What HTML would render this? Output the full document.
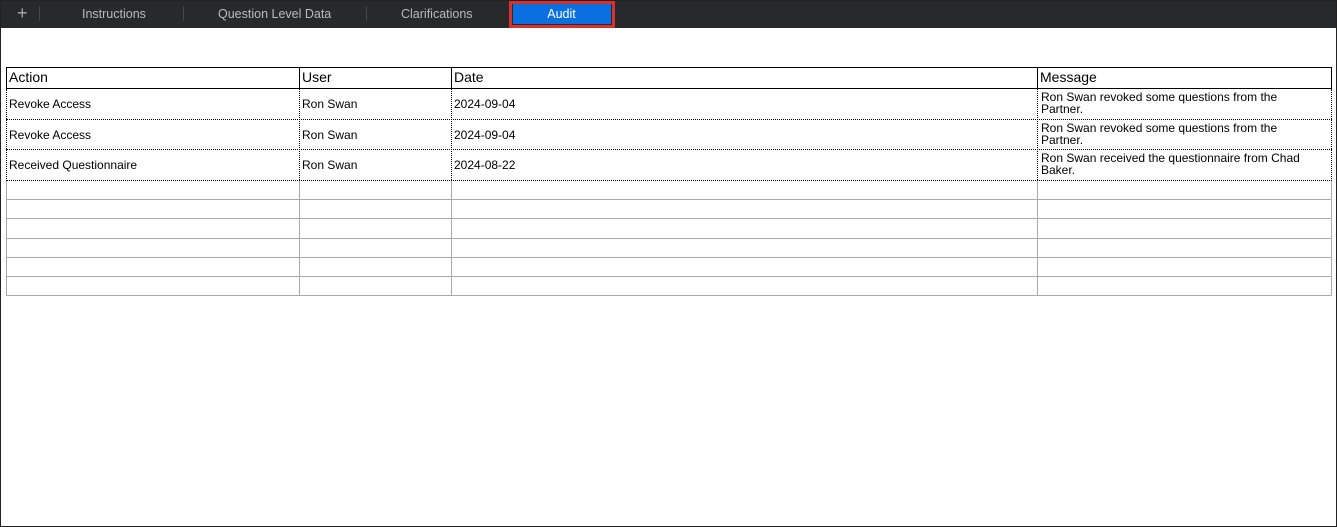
<!DOCTYPE html>
<html><head><style>
*{margin:0;padding:0;box-sizing:border-box}
body{width:1337px;height:527px;background:#fff;position:relative;overflow:hidden;font-family:"Liberation Sans",Arial,sans-serif}
.frame{position:absolute;left:0;top:0;width:1337px;height:527px;border:1px solid #222}
.bar{position:absolute;left:0;top:0;width:1337px;height:28px;background:#27292b}
.tab{position:absolute;top:7px;font-size:12.5px;color:#b8babc}
.sep{position:absolute;top:6px;width:1px;height:15px;background:#45484a}
.a{position:absolute}
.t{position:absolute;font-size:12px;color:#000;line-height:12px}
.h{position:absolute;font-size:14px;color:#000}
</style></head><body>
<div class="bar"></div>
<div class="tab" style="left:17px;top:3px;font-size:18px;color:#aaa">+</div>
<div class="sep" style="left:39px"></div>
<div class="tab" style="left:82px">Instructions</div>
<div class="sep" style="left:183px"></div>
<div class="tab" style="left:218px">Question Level Data</div>
<div class="sep" style="left:366px"></div>
<div class="tab" style="left:401px">Clarifications</div>
<div class="a" style="left:509px;top:1px;width:106px;height:27px;border:3px solid #d8302c;background:#27292b"></div>
<div class="a" style="left:513px;top:4px;width:98px;height:20px;background:#0a6fe0"></div>
<div class="tab" style="left:513px;width:97px;text-align:center;color:#fff">Audit</div>
<div class="frame"></div>

<div class="a" style="left:6px;top:67px;width:1326px;height:22px;border:1px solid #000"></div>
<div class="a" style="left:299px;top:67px;width:1px;height:22px;background:#000"></div>
<div class="a" style="left:451px;top:67px;width:1px;height:22px;background:#000"></div>
<div class="a" style="left:1037px;top:67px;width:1px;height:22px;background:#000"></div>
<div class="h" style="left:9px;top:69px">Action</div>
<div class="h" style="left:302px;top:69px">User</div>
<div class="h" style="left:454px;top:69px">Date</div>
<div class="h" style="left:1040px;top:69px">Message</div>

<div class="a" style="left:6px;top:180px;width:1326px;height:116px;border:1px solid #aaa;border-top:none"></div>
<div class="a" style="left:6px;top:199px;width:1326px;height:1px;background:#aaa"></div>
<div class="a" style="left:6px;top:218px;width:1326px;height:1px;background:#aaa"></div>
<div class="a" style="left:6px;top:238px;width:1326px;height:1px;background:#aaa"></div>
<div class="a" style="left:6px;top:257px;width:1326px;height:1px;background:#aaa"></div>
<div class="a" style="left:6px;top:276px;width:1326px;height:1px;background:#aaa"></div>
<div class="a" style="left:299px;top:180px;width:1px;height:116px;background:#aaa"></div>
<div class="a" style="left:451px;top:180px;width:1px;height:116px;background:#aaa"></div>
<div class="a" style="left:1037px;top:180px;width:1px;height:116px;background:#aaa"></div>

<div class="a" style="left:6px;top:89px;width:1326px;height:92px;border:1px dotted #000;border-top:none"></div>
<div class="a" style="left:6px;top:119px;width:1326px;height:0;border-top:1px dotted #000"></div>
<div class="a" style="left:6px;top:149px;width:1326px;height:0;border-top:1px dotted #000"></div>
<div class="a" style="left:299px;top:88px;height:92px;width:0;border-left:1px dotted #000"></div>
<div class="a" style="left:451px;top:88px;height:92px;width:0;border-left:1px dotted #000"></div>
<div class="a" style="left:1037px;top:88px;height:92px;width:0;border-left:1px dotted #000"></div>

<div class="t" style="left:9px;top:98px">Revoke Access</div>
<div class="t" style="left:302px;top:98px">Ron Swan</div>
<div class="t" style="left:454px;top:98px">2024-09-04</div>
<div class="t" style="left:1041px;top:91px">Ron Swan revoked some questions from the<br>Partner.</div>
<div class="t" style="left:9px;top:129px">Revoke Access</div>
<div class="t" style="left:302px;top:129px">Ron Swan</div>
<div class="t" style="left:454px;top:129px">2024-09-04</div>
<div class="t" style="left:1041px;top:122px">Ron Swan revoked some questions from the<br>Partner.</div>
<div class="t" style="left:9px;top:159px">Received Questionnaire</div>
<div class="t" style="left:302px;top:159px">Ron Swan</div>
<div class="t" style="left:454px;top:159px">2024-08-22</div>
<div class="t" style="left:1041px;top:152px">Ron Swan received the questionnaire from Chad<br>Baker.</div>
</body></html>
